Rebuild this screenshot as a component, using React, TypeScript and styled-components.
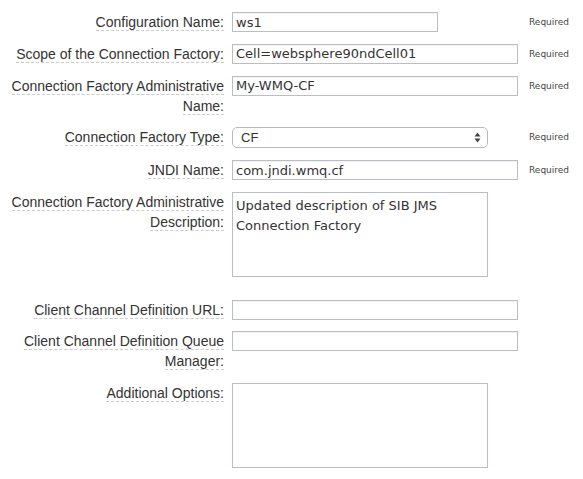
import styled, { createGlobalStyle } from 'styled-components';

const GlobalStyle = createGlobalStyle`
  body {
    margin: 8px;
    background: #ffffff;
    font-family: "Liberation Sans", Arial, sans-serif;
    color: #333333;
  }
`;

const Form = styled.form`
  display: flex;
  flex-direction: column;
  padding-top: 4px;
`;

const Row = styled.div`
  display: flex;
  align-items: flex-start;
  margin-bottom: 11.75px;
`;

const LabelCol = styled.label`
  width: 216px;
  flex: none;
  text-align: right;
  font-size: 14px;
  line-height: 20px;
  color: #333333;
`;

const LabelText = styled.span`
  border-bottom: 1px dashed #cccccc;
`;

const FieldCol = styled.div`
  width: 286px;
  margin-left: 8px;
  flex: none;
`;

const TextInput = styled.input<{ $w: number }>`
  box-sizing: border-box;
  display: block;
  width: ${p => p.$w}px;
  height: 20px;
  margin: 0;
  padding: 0 3px;
  border: 1px solid #b9bccb;
  box-shadow: inset 0 1px 1px rgba(0, 0, 0, 0.06);
  font-family: "DejaVu Sans", Verdana, sans-serif;
  font-size: 13px;
  color: #333333;
  background: #ffffff;
  outline: none;
`;

const TextArea = styled.textarea`
  box-sizing: border-box;
  display: block;
  width: 256px;
  height: 85px;
  margin: 0 0 11px 0;
  padding: 3px 3px;
  border: 1px solid #b9bccb;
  font-family: "DejaVu Sans", Verdana, sans-serif;
  font-size: 13px;
  line-height: 20px;
  color: #333333;
  resize: none;
  outline: none;
`;

const SelectWrap = styled.div`
  position: relative;
  width: 256px;
  height: 21px;
`;

const Select = styled.select`
  box-sizing: border-box;
  appearance: none;
  -webkit-appearance: none;
  width: 100%;
  height: 21px;
  margin: 0;
  padding: 0 20px 0 8px;
  border: 1px solid #b9b9b9;
  border-radius: 5px;
  background: #ffffff;
  font-family: "Liberation Sans", Arial, sans-serif;
  font-size: 13px;
  color: #333333;
  outline: none;
`;

const Arrows = styled.svg`
  position: absolute;
  right: 7px;
  top: 5px;
  pointer-events: none;
`;

const Required = styled.span`
  margin-left: 11px;
  font-family: "DejaVu Sans", Verdana, sans-serif;
  font-size: 9px;
  line-height: 20px;
  color: #444444;
  white-space: nowrap;
`;

type Field = {
  label: string;
  kind: 'input' | 'select' | 'textarea';
  value?: string;
  width?: number;
  required?: boolean;
};

const fields: Field[] = [
  { label: 'Configuration Name:', kind: 'input', value: 'ws1', width: 206, required: true },
  { label: 'Scope of the Connection Factory:', kind: 'input', value: 'Cell=websphere90ndCell01', width: 286, required: true },
  { label: 'Connection Factory Administrative Name:', kind: 'input', value: 'My-WMQ-CF', width: 286, required: true },
  { label: 'Connection Factory Type:', kind: 'select', value: 'CF', required: true },
  { label: 'JNDI Name:', kind: 'input', value: 'com.jndi.wmq.cf', width: 286, required: true },
  { label: 'Connection Factory Administrative Description:', kind: 'textarea', value: 'Updated description of SIB JMS Connection Factory' },
  { label: 'Client Channel Definition URL:', kind: 'input', value: '', width: 286 },
  { label: 'Client Channel Definition Queue Manager:', kind: 'input', value: '', width: 286 },
  { label: 'Additional Options:', kind: 'textarea', value: '' },
];

const renderControl = (f: Field) => {
  if (f.kind === 'select') {
    return (
      <SelectWrap>
        <Select defaultValue={f.value}>
          <option value="CF">CF</option>
          <option value="QCF">QCF</option>
          <option value="TCF">TCF</option>
        </Select>
        <Arrows width="7" height="11" viewBox="0 0 7 11">
          <path d="M3.5 0.5 L6.5 4.5 L0.5 4.5 Z" fill="#444" />
          <path d="M3.5 10.5 L6.5 6.5 L0.5 6.5 Z" fill="#444" />
        </Arrows>
      </SelectWrap>
    );
  }
  if (f.kind === 'textarea') {
    return <TextArea defaultValue={f.value} />;
  }
  return <TextInput $w={f.width || 286} defaultValue={f.value} />;
};

const App = () => {
  return (
    <>
      <GlobalStyle />
      <Form>
        {fields.map(f => (
          <Row key={f.label}>
            <LabelCol>
              <LabelText>{f.label}</LabelText>
            </LabelCol>
            <FieldCol>{renderControl(f)}</FieldCol>
            {f.required && <Required>Required</Required>}
          </Row>
        ))}
      </Form>
    </>
  );
};

export default App;
